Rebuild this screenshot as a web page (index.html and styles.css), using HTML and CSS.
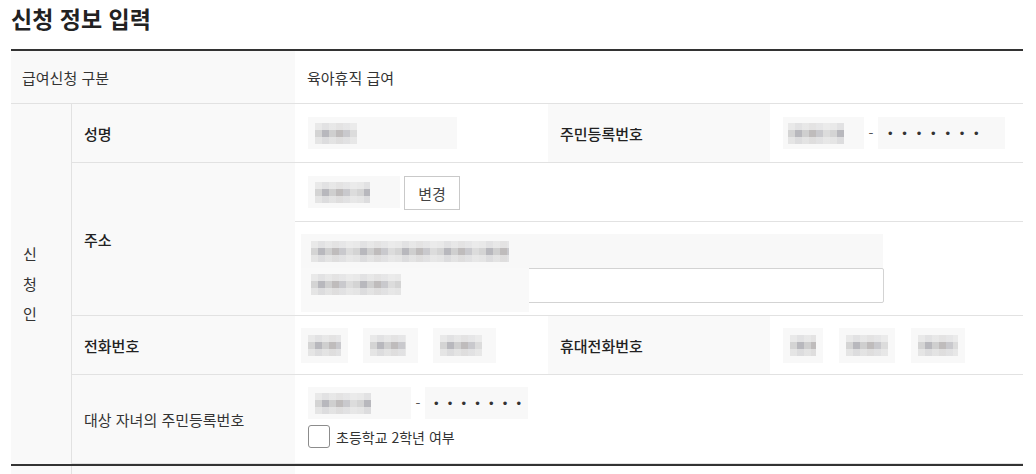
FILE: index.html
```html
<!DOCTYPE html>
<html lang="ko">
<head>
    <meta charset="UTF-8">
    <meta name="viewport" content="width=device-width, initial-scale=1.0">
    <title>신청 정보 입력</title>
    <link rel="stylesheet" href="styles.css">
</head>
<body>
    <div class="page">
        <h2 class="title">신청 정보 입력</h2>

        <div class="form-table">
            <div class="row row-kind">
                <div class="th">급여신청 구분</div>
                <div class="td">육아휴직 급여</div>
            </div>

            <div class="group">
                <div class="group-label"><span>신</span><span>청</span><span>인</span></div>
                <div class="group-rows">

                    <div class="row row-half">
                        <div class="th strong">성명</div>
                        <div class="td">
                            <span class="field field-name"><span class="mosaic" style="width:42px"></span></span>
                        </div>
                        <div class="th strong">주민등록번호</div>
                        <div class="td">
                            <span class="field field-rrn1"><span class="mosaic" style="width:56px"></span></span>
                            <span class="dash">-</span>
                            <span class="field field-rrn2"><span class="dots">•••••••</span></span>
                        </div>
                    </div>

                    <div class="row row-full row-address">
                        <div class="th strong">주소</div>
                        <div class="td td-stack">
                            <div class="sub sub-zip">
                                <span class="field field-zip"><span class="mosaic" style="width:55px"></span></span>
                                <button type="button" class="btn-change">변경</button>
                            </div>
                            <div class="sub sub-addr">
                                <div class="field field-addr1"><span class="mosaic" style="width:198px"></span></div>
                                <div class="field-addr2">
                                    <span class="addr2-value"><span class="mosaic" style="width:90px"></span></span>
                                </div>
                            </div>
                        </div>
                    </div>

                    <div class="row row-half">
                        <div class="th strong">전화번호</div>
                        <div class="td td-tel">
                            <span class="field field-tel tel-a"><span class="mosaic" style="width:35px"></span></span>
                            <span class="field field-tel tel-b"><span class="mosaic" style="width:36px"></span></span>
                            <span class="field field-tel tel-c"><span class="mosaic" style="width:42px"></span></span>
                        </div>
                        <div class="th strong">휴대전화번호</div>
                        <div class="td td-tel td-mobile">
                            <span class="field field-tel mob-a"><span class="mosaic" style="width:30px"></span></span>
                            <span class="field field-tel mob-b"><span class="mosaic" style="width:42px"></span></span>
                            <span class="field field-tel mob-c"><span class="mosaic" style="width:40px"></span></span>
                        </div>
                    </div>

                    <div class="row row-full row-child">
                        <div class="th">대상 자녀의 주민등록번호</div>
                        <div class="td td-stack td-child">
                            <div class="sub-line">
                                <span class="field field-child"><span class="mosaic" style="width:56px"></span></span>
                                <span class="dash">-</span>
                                <span class="field field-child"><span class="dots dots-child">•••••••</span></span>
                            </div>
                            <label class="check">
                                <span class="check-box"></span>
                                초등학교 2학년 여부
                            </label>
                        </div>
                    </div>

                </div>
            </div>
        </div>

        <div class="form-table form-table-next">
            <div class="group">
                <div class="group-label"></div>
                <div class="group-rows">
                    <div class="row row-full">
                        <div class="th"></div>
                        <div class="td"></div>
                    </div>
                </div>
            </div>
        </div>
    </div>
</body>
</html>
```

FILE: styles.css
```css
* {
    box-sizing: border-box;
}

body {
    margin: 0;
    font-family: "Noto Sans CJK KR", "Noto Sans", sans-serif;
    font-size: 15px;
    color: #333;
    background: #fff;
}

.page {
    padding: 0 13px 0 11px;
}

.title {
    margin: 0;
    height: 49px;
    padding-top: 1px;
    font-size: 23px;
    font-weight: bold;
    color: #222;
    line-height: 34px;
}

.form-table {
    border-top: 2px solid #333;
}

.row {
    display: grid;
    border-bottom: 1px solid #e2e2e2;
}

.row-kind {
    grid-template-columns: 284px 1fr;
    height: 53px;
}

.row-half {
    grid-template-columns: 223px 253px 222px 1fr;
    height: 59px;
}

.row-full {
    grid-template-columns: 223px 1fr;
}

.row-address {
    height: 153px;
}

.row-child {
    height: 89px;
}

.th {
    background: #f9f9f9;
    display: flex;
    align-items: center;
    padding-left: 12px;
    color: #333;
}

.row-kind .th {
    padding-left: 11px;
}

.th.strong {
    font-weight: 500;
    color: #222;
}

.td {
    display: flex;
    align-items: center;
    padding-left: 13px;
}

.row-kind .td {
    padding-left: 12px;
}

.group {
    display: grid;
    grid-template-columns: 61px 1fr;
}

.group-label {
    background: #f9f9f9;
    border-right: 1px solid #e2e2e2;
    display: flex;
    flex-direction: column;
    justify-content: center;
    padding-left: 12px;
    line-height: 30px;
}

/* input-like boxes; the values are masked */
.field {
    display: inline-flex;
    align-items: center;
    flex-shrink: 0;
    height: 32px;
    background: #f8f8f8;
    padding-left: 7px;
}

.mosaic {
    display: inline-block;
    height: 21px;
    background:
        linear-gradient(to bottom, rgba(240, 240, 240, 0.75) 0 7px, transparent 7px 14px, rgba(236, 236, 236, 0.7) 14px),
        repeating-linear-gradient(to right, #d4d4d4 0 7px, #b8b8bd 7px 14px, #cfcfcf 14px 21px, #bfbcbc 21px 28px, #c9c9cd 28px 35px, #dcdcdc 35px 42px);
}

.field-name {
    width: 149px;
}

.field-rrn1 {
    width: 81px;
    padding-left: 5px;
}

.field-rrn2 {
    width: 127px;
}

.dash {
    width: 14px;
    text-align: center;
    font-size: 14px;
    color: #555;
}

.dots {
    font-family: "Liberation Sans", sans-serif;
    font-size: 13px;
    letter-spacing: 9.8px;
    color: #333;
    padding-left: 3px;
    white-space: nowrap;
}

.dots-child {
    letter-spacing: 9.2px;
    padding-left: 2px;
}

.td-stack {
    flex-direction: column;
    align-items: stretch;
    padding-left: 0;
}

.sub-zip {
    height: 59px;
    border-bottom: 1px solid #e2e2e2;
    display: flex;
    align-items: center;
    gap: 4px;
    padding-left: 13px;
}

.field-zip {
    width: 92px;
}

.btn-change {
    height: 34px;
    width: 56px;
    margin-top: 2px;
    background: #fff;
    border: 1px solid #c9c9c9;
    font-family: inherit;
    font-size: 15px;
    color: #444;
    cursor: pointer;
}

.sub-addr {
    padding: 12px 0 0 6px;
}

.field-addr1 {
    width: 582px;
    height: 34px;
    padding-left: 10px;
}

.field-addr2 {
    position: relative;
    width: 583px;
    height: 35px;
    border: 1px solid #d3d3d3;
    border-radius: 2px;
}

.addr2-value {
    position: absolute;
    left: -1px;
    top: -1px;
    width: 228px;
    height: 44px;
    background: #f9f9f9;
    display: flex;
    align-items: flex-start;
    padding: 6px 0 0 10px;
}

.td-tel {
    gap: 15px;
    padding-left: 6px;
}

.td-mobile {
    padding-left: 13px;
    gap: 16px;
}

.field-tel {
    height: 35px;
    padding: 0 7px;
}

.tel-a { width: 47px; }
.tel-b { width: 55px; }
.tel-c { width: 63px; }
.mob-a { width: 40px; }
.mob-b { width: 56px; }
.mob-c { width: 54px; }

.td-child {
    padding: 12px 0 0 13px;
}

.sub-line {
    display: flex;
    align-items: center;
}

.field-child {
    width: 103px;
}

.check {
    display: flex;
    align-items: center;
    gap: 6px;
    margin-top: 6px;
    font-size: 14px;
    color: #333;
}

.check-box {
    width: 22px;
    height: 23px;
    border: 1px solid #8c8c8c;
    border-radius: 3px;
    background: #fff;
}

.form-table-next .row {
    height: 20px;
    border-bottom: none;
}
```
